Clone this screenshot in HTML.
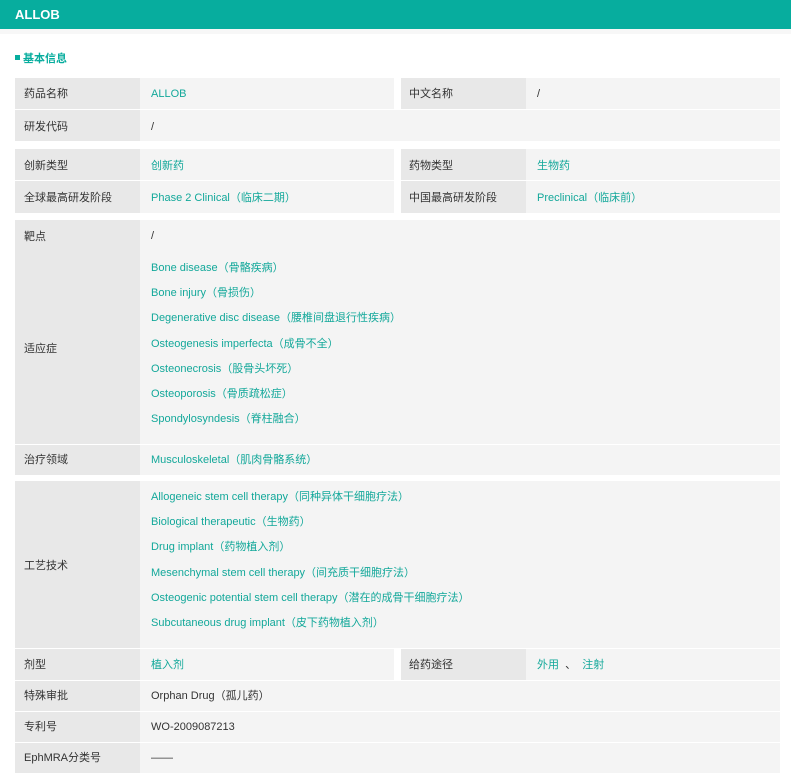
<!DOCTYPE html><html><head><meta charset="utf-8"><style>
*{margin:0;padding:0;box-sizing:border-box}
body{width:791px;height:775px;background:#fff;font-family:"Liberation Sans","Noto Sans CJK SC",sans-serif;font-size:11px;color:#333;position:relative;overflow:hidden}
.hd{position:absolute;left:0;top:0;width:791px;height:29px;background:#07ad9e;color:#fff;font-weight:bold;font-size:13px;padding:7px 0 0 15px}
.sub{position:absolute;left:0;top:29px;width:791px;height:5px;background:#f7f7f7}
.sec{position:absolute;left:15px;top:50px;color:#07ad9e;font-weight:bold;font-size:11px}
.sec i{display:inline-block;width:5px;height:5px;background:#07ad9e;margin-right:3px;vertical-align:2px}
.b{position:absolute}
.l{background:#e8e8e8}.v{background:#f4f4f4}
.t{position:absolute;white-space:nowrap;line-height:14px;padding-top:1px}
.g{color:#13a89a}
</style></head><body>
<div class="hd">ALLOB</div><div class="sub"></div>
<div class="sec"><i></i>基本信息</div>

<div class="b l" style="left:15px;top:78px;width:125px;height:31px"></div>
<div class="b v" style="left:140px;top:78px;width:254px;height:31px"></div>
<div class="b l" style="left:401px;top:78px;width:125px;height:31px"></div>
<div class="b v" style="left:526px;top:78px;width:254px;height:31px"></div>
<div class="t" style="left:24px;top:86px">药品名称</div><div class="t g" style="left:151px;top:86px">ALLOB</div>
<div class="t" style="left:409px;top:86px">中文名称</div><div class="t" style="left:537px;top:86px">/</div>
<div class="b l" style="left:15px;top:110px;width:125px;height:31px"></div>
<div class="b v" style="left:140px;top:110px;width:640px;height:31px"></div>
<div class="t" style="left:24px;top:119px">研发代码</div><div class="t" style="left:151px;top:119px">/</div>
<div class="b l" style="left:15px;top:149px;width:125px;height:31px"></div>
<div class="b v" style="left:140px;top:149px;width:254px;height:31px"></div>
<div class="b l" style="left:401px;top:149px;width:125px;height:31px"></div>
<div class="b v" style="left:526px;top:149px;width:254px;height:31px"></div>
<div class="t" style="left:24px;top:158px">创新类型</div><div class="t g" style="left:151px;top:158px">创新药</div>
<div class="t" style="left:409px;top:158px">药物类型</div><div class="t g" style="left:537px;top:158px">生物药</div>
<div class="b l" style="left:15px;top:181px;width:125px;height:32px"></div>
<div class="b v" style="left:140px;top:181px;width:254px;height:32px"></div>
<div class="b l" style="left:401px;top:181px;width:125px;height:32px"></div>
<div class="b v" style="left:526px;top:181px;width:254px;height:32px"></div>
<div class="t" style="left:24px;top:190px">全球最高研发阶段</div><div class="t g" style="left:151px;top:190px">Phase 2 Clinical（临床二期）</div>
<div class="t" style="left:409px;top:190px">中国最高研发阶段</div><div class="t g" style="left:537px;top:190px">Preclinical（临床前）</div>
<div class="b l" style="left:15px;top:220px;width:125px;height:224px"></div>
<div class="b v" style="left:140px;top:220px;width:640px;height:224px"></div>
<div class="t" style="left:24px;top:229px">靶点</div><div class="t" style="left:151px;top:228px">/</div>
<div class="t" style="left:24px;top:341px">适应症</div>
<div class="t g" style="left:151px;top:260px">Bone disease（骨骼疾病）</div>
<div class="t g" style="left:151px;top:285px">Bone injury（骨损伤）</div>
<div class="t g" style="left:151px;top:310px">Degenerative disc disease（腰椎间盘退行性疾病）</div>
<div class="t g" style="left:151px;top:336px">Osteogenesis imperfecta（成骨不全）</div>
<div class="t g" style="left:151px;top:361px">Osteonecrosis（股骨头坏死）</div>
<div class="t g" style="left:151px;top:386px">Osteoporosis（骨质疏松症）</div>
<div class="t g" style="left:151px;top:411px">Spondylosyndesis（脊柱融合）</div>
<div class="b l" style="left:15px;top:445px;width:125px;height:30px"></div>
<div class="b v" style="left:140px;top:445px;width:640px;height:30px"></div>
<div class="t" style="left:24px;top:452px">治疗领域</div><div class="t g" style="left:151px;top:452px">Musculoskeletal（肌肉骨骼系统）</div>
<div class="b l" style="left:15px;top:481px;width:125px;height:167px"></div>
<div class="b v" style="left:140px;top:481px;width:640px;height:167px"></div>
<div class="t" style="left:24px;top:558px">工艺技术</div>
<div class="t g" style="left:151px;top:489px">Allogeneic stem cell therapy（同种异体干细胞疗法）</div>
<div class="t g" style="left:151px;top:514px">Biological therapeutic（生物药）</div>
<div class="t g" style="left:151px;top:539px">Drug implant（药物植入剂）</div>
<div class="t g" style="left:151px;top:565px">Mesenchymal stem cell therapy（间充质干细胞疗法）</div>
<div class="t g" style="left:151px;top:590px">Osteogenic potential stem cell therapy（潜在的成骨干细胞疗法）</div>
<div class="t g" style="left:151px;top:615px">Subcutaneous drug implant（皮下药物植入剂）</div>
<div class="b l" style="left:15px;top:649px;width:125px;height:31px"></div>
<div class="b v" style="left:140px;top:649px;width:254px;height:31px"></div>
<div class="b l" style="left:401px;top:649px;width:125px;height:31px"></div>
<div class="b v" style="left:526px;top:649px;width:254px;height:31px"></div>
<div class="t" style="left:24px;top:657px">剂型</div><div class="t g" style="left:151px;top:657px">植入剂</div>
<div class="t" style="left:409px;top:657px">给药途径</div><div class="t" style="left:537px;top:657px"><span class="g">外用</span> &nbsp;、 &nbsp;<span class="g">注射</span></div>
<div class="b l" style="left:15px;top:681px;width:125px;height:30px"></div>
<div class="b v" style="left:140px;top:681px;width:640px;height:30px"></div>
<div class="t" style="left:24px;top:688px">特殊审批</div><div class="t" style="left:151px;top:688px">Orphan Drug（孤儿药）</div>
<div class="b l" style="left:15px;top:712px;width:125px;height:30px"></div>
<div class="b v" style="left:140px;top:712px;width:640px;height:30px"></div>
<div class="t" style="left:24px;top:719px">专利号</div><div class="t" style="left:151px;top:719px">WO-2009087213</div>
<div class="b l" style="left:15px;top:743px;width:125px;height:30px"></div>
<div class="b v" style="left:140px;top:743px;width:640px;height:30px"></div>
<div class="t" style="left:24px;top:750px">EphMRA分类号</div><div class="t" style="left:151px;top:750px">——</div>
</body></html>
